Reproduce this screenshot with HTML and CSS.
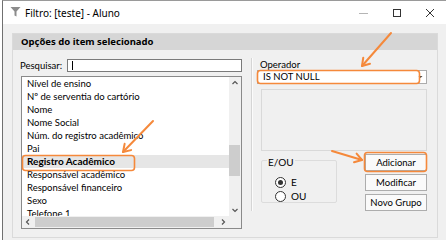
FILE: index.html
```html
<!DOCTYPE html>
<html lang="pt">
<head>
<meta charset="utf-8">
<title>Filtro</title>
<link rel="stylesheet" href="styles.css">
</head>
<body>
<div class="window">
  <div class="titlebar">
    <svg class="funnel" width="12" height="12" viewBox="0 0 12 12"><path d="M0.5 1 H10.5 L6.5 5.5 V10.5 L4.5 9.5 V5.5 Z" fill="#8c8c8c"/></svg>
    <span class="title">Filtro: [teste] - Aluno</span>
    <div class="controls">
      <svg width="10" height="10" viewBox="0 0 10 10"><path d="M0 5.5 H9" stroke="#b5b5b5" stroke-width="1"/></svg>
      <svg width="10" height="10" viewBox="0 0 10 10"><rect x="1.5" y="1.5" width="7" height="7" fill="none" stroke="#333" stroke-width="1"/></svg>
      <svg width="10" height="10" viewBox="0 0 10 10"><path d="M1 1 L9 9 M9 1 L1 9" stroke="#333" stroke-width="1"/></svg>
    </div>
  </div>
  <div class="client">
    <div class="panel">
      <div class="panel-header">Opções do item selecionado</div>
      <div class="panel-body">
        <div class="left">
          <div class="search-row">
            <span class="label">Pesquisar:</span>
            <div class="input"><span class="caret"></span></div>
          </div>
          <div class="listbox">
            <div class="list-main">
              <div class="items">
                <div class="item">Nível de ensino</div>
                <div class="item">Nº de serventia do cartório</div>
                <div class="item">Nome</div>
                <div class="item">Nome Social</div>
                <div class="item">Núm. do registro acadêmico</div>
                <div class="item">Pai</div>
                <div class="item selected">Registro Acadêmico</div>
                <div class="item">Responsável acadêmico</div>
                <div class="item">Responsável financeiro</div>
                <div class="item">Sexo</div>
                <div class="item last">Telefone 1</div>
              </div>
              <div class="vscroll">
                <svg class="arrow" width="12" height="12" viewBox="0 0 12 12"><path d="M3.5 7 L6 4.5 L8.5 7" fill="none" stroke="#555" stroke-width="1.2"/></svg>
                <div class="vtrack"><div class="vthumb"></div></div>
                <svg class="arrow" width="12" height="12" viewBox="0 0 12 12"><path d="M3.5 5 L6 7.5 L8.5 5" fill="none" stroke="#555" stroke-width="1.2"/></svg>
              </div>
            </div>
            <div class="hscroll-row">
              <div class="hscroll">
                <svg class="arrow" width="12" height="12" viewBox="0 0 12 12"><path d="M7 3.5 L4.5 6 L7 8.5" fill="none" stroke="#555" stroke-width="1.2"/></svg>
                <div class="htrack"><div class="hthumb"></div></div>
                <svg class="arrow" width="12" height="12" viewBox="0 0 12 12"><path d="M5 3.5 L7.5 6 L5 8.5" fill="none" stroke="#555" stroke-width="1.2"/></svg>
              </div>
              <div class="corner"></div>
            </div>
          </div>
        </div>
        <div class="sep"></div>
        <div class="right">
          <div class="op-label">Operador</div>
          <div class="combo">
            <span class="combo-text">IS NOT NULL</span>
            <svg class="combo-arrow" width="7" height="4" viewBox="0 0 7 4"><path d="M1.5 1 H5.5 L3.5 3 Z" fill="#444"/></svg>
          </div>
          <div class="memo"></div>
          <div class="lower">
            <fieldset class="group">
              <legend>E/OU</legend>
              <div class="radio-row"><span class="radio checked"></span><span>E</span></div>
              <div class="radio-row"><span class="radio"></span><span>OU</span></div>
            </fieldset>
            <div class="buttons">
              <div class="btn">Adicionar</div>
              <div class="btn">Modificar</div>
              <div class="btn">Novo Grupo</div>
            </div>
          </div>
        </div>
      </div>
    </div>
  </div>
</div>
<svg class="annot" width="446" height="240" viewBox="0 0 446 240">
  <defs>
    <marker id="ah" markerWidth="12" markerHeight="12" refX="9" refY="6" orient="auto" markerUnits="userSpaceOnUse">
      <path d="M2 1.5 L9 6 L2 10.5" fill="none" stroke="#f5893b" stroke-width="2" stroke-linecap="round" stroke-linejoin="round"/>
    </marker>
  </defs>
  <g fill="none" stroke="#f5893b" stroke-width="1.6">
    <rect x="22.5" y="155.5" width="112" height="15" rx="3"/>
    <rect x="257.5" y="70.5" width="162" height="13" rx="3"/>
    <rect x="364.5" y="152.5" width="62" height="19" rx="3"/>
  </g>
  <g stroke="#f5893b" stroke-width="2" stroke-linecap="round" marker-end="url(#ah)">
    <line x1="391" y1="33" x2="362" y2="66"/>
    <line x1="153" y1="121" x2="123" y2="152"/>
    <line x1="332" y1="151" x2="362" y2="160"/>
  </g>
</svg>
</body>
</html>
```

FILE: styles.css
```css
html, body {
  margin: 0;
  padding: 0;
}
body {
  width: 446px;
  height: 240px;
  overflow: hidden;
  background: #ffffff;
  font-family: Lato, "Noto Sans", sans-serif;
  font-size: 9.5px;
  color: #000;
  position: relative;
}
.window {
  margin-left: 2px;
  width: 444px;
  height: 239px;
  border-left: 1px solid #707070;
  border-top: 1px solid #9a9a9a;
  background: #f0f0f0;
  display: flex;
  flex-direction: column;
}
.titlebar {
  height: 23px;
  background: #fff;
  display: flex;
  align-items: center;
  padding-left: 7px;
}
.funnel {
  display: block;
  margin-right: 3px;
  margin-top: -1px;
}
.title {
  font-family: "Noto Sans", sans-serif;
  font-size: 10px;
  line-height: 12px;
}
.controls {
  margin-left: auto;
  display: flex;
  align-items: center;
  gap: 23px;
  margin-right: 12px;
}
.controls svg {
  display: block;
}
.client {
  flex: 1;
  padding: 9px 0 0 9px;
}
.panel {
  width: 424px;
  height: 203px;
  border: 1px solid #dadada;
  display: flex;
  flex-direction: column;
}
.panel-header {
  height: 16px;
  background: #d6d6d6;
  font-family: "Noto Sans", sans-serif;
  font-weight: bold;
  font-size: 9.5px;
  line-height: 16px;
  padding-left: 8px;
}
.panel-body {
  display: flex;
  padding: 9px 9px 0 8px;
}
.left {
  width: 221px;
  display: flex;
  flex-direction: column;
}
.search-row {
  height: 13px;
  display: flex;
  align-items: center;
}
.label {
  width: 46px;
  margin-left: -1px;
  line-height: 13px;
}
.input {
  height: 11px;
  background: #fff;
  border: 1px solid #7a7a7a;
  display: flex;
  align-items: center;
  padding-left: 4px;
  box-sizing: content-box;
  margin-left: 1px;
  width: 169px;
}
.caret {
  width: 1px;
  height: 9px;
  background: #000;
}
.listbox {
  margin-top: 4px;
  height: 151px;
  border: 1px solid #8a8a8a;
  background: #fff;
  display: flex;
  flex-direction: column;
}
.list-main {
  height: 139px;
  display: flex;
}
.items {
  flex: 1;
  overflow: hidden;
}
.item {
  height: 13px;
  line-height: 13px;
  padding-left: 5px;
  white-space: nowrap;
}
.item.last {
  height: 7px;
  overflow: visible;
}
.item.selected {
  background: #e6e6e6;
  font-weight: bold;
  font-size: 10px;
}
.vscroll {
  width: 12px;
  background: #f0f0f0;
  display: flex;
  flex-direction: column;
}
.arrow {
  display: block;
  flex: none;
}
.vtrack {
  flex: 1;
  padding-top: 56px;
}
.vthumb {
  width: 11px;
  height: 31px;
  background: #cdcdcd;
}
.hscroll-row {
  height: 12px;
  display: flex;
  position: relative;
  z-index: 1;
}
.hscroll {
  flex: 1;
  display: flex;
  background: #f0f0f0;
}
.htrack {
  flex: 1;
  padding: 0 3px 0 1px;
  display: flex;
  align-items: center;
}
.hthumb {
  width: 100%;
  height: 10px;
  background: #cdcdcd;
}
.corner {
  width: 12px;
  background: #f0f0f0;
}
.sep {
  margin-left: 9px;
  margin-top: -1px;
  width: 0;
  height: 153px;
  border-left: 1px solid #d5d5d5;
  border-right: 1px solid #fbfbfb;
}
.right {
  margin-left: 4px;
  width: 170px;
  display: flex;
  flex-direction: column;
}
.op-label {
  height: 11px;
  line-height: 11px;
  padding-left: 3px;
}
.combo {
  height: 12px;
  border: 1px solid #acacac;
  background: #fff;
  display: flex;
  align-items: center;
  padding-left: 5px;
}
.combo-text {
  line-height: 12px;
}
.combo-arrow {
  display: block;
  margin-left: auto;
  margin-right: 2px;
}
.memo {
  margin-top: 5px;
  margin-left: 4px;
  height: 60px;
  border: 1px solid #d9d9d9;
  background: #f0f0f0;
}
.lower {
  display: flex;
  margin-top: 3px;
}
.group {
  margin: 0 0 0 4px;
  padding: 0 0 0 13px;
  width: 61px;
  height: 47px;
  border: 1px solid #dcdcdc;
  border-radius: 2px;
  box-sizing: content-box;
}
.group legend {
  padding: 4px 1px 0 1px;
  margin-left: -8px;
  line-height: 8px;
  font-size: 10px;
}
.radio-row {
  display: flex;
  align-items: center;
  height: 14px;
  gap: 5px;
  font-size: 10px;
}
.radio-row:first-of-type {
  margin-top: 9px;
}
.radio {
  width: 9px;
  height: 9px;
  border: 1px solid #333;
  border-radius: 50%;
  background: #fff;
  display: flex;
  align-items: center;
  justify-content: center;
}
.radio.checked::after {
  content: "";
  width: 5px;
  height: 5px;
  border-radius: 50%;
  background: #333;
}
.buttons {
  margin-left: auto;
  width: 62px;
  display: flex;
  flex-direction: column;
  gap: 3px;
}
.btn {
  height: 15px;
  border: 1px solid #adadad;
  background: #fafafa;
  text-align: center;
  line-height: 15px;
}
.annot {
  position: absolute;
  left: 0;
  top: 0;
  pointer-events: none;
}
```
